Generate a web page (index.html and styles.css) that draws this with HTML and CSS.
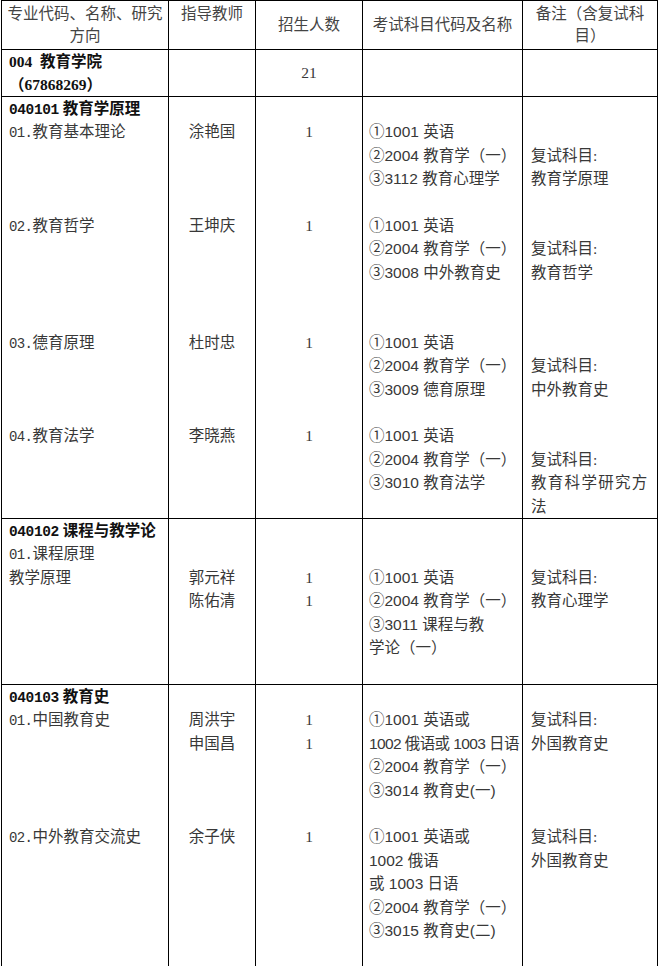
FILE: index.html
```html
<!DOCTYPE html>
<html lang="zh-CN">
<head>
<meta charset="utf-8">
<title>招生专业目录</title>
<link rel="stylesheet" href="styles.css">
</head>
<body>
<table class="plan">
  <colgroup>
    <col class="c1"><col class="c2"><col class="c3"><col class="c4"><col class="c5">
  </colgroup>
  <tr class="head">
    <td class="hc"><div>专业代码、名称、研究</div><div>方向</div></td>
    <td class="hc">指导教师</td>
    <td class="hc mid">招生人数</td>
    <td class="hc mid">考试科目代码及名称</td>
    <td class="hc"><div>备注（含复试科</div><div>目）</div></td>
  </tr>
  <tr class="school">
    <td class="name"><div class="b">004&nbsp; 教育学院</div><div class="b">（67868269）</div></td>
    <td></td>
    <td class="cnt mid">21</td>
    <td></td>
    <td></td>
  </tr>
  <tr class="sec sec1">
    <td class="name">
      <div class="ln"><b class="code">040101</b> <b>教育学原理</b></div>
      <div class="ln"><span class="m">01.</span>教育基本理论</div>
      <div class="ln"></div><div class="ln"></div><div class="ln"></div>
      <div class="ln"><span class="m">02.</span>教育哲学</div>
      <div class="ln"></div><div class="ln"></div><div class="ln"></div><div class="ln"></div>
      <div class="ln"><span class="m">03.</span>德育原理</div>
      <div class="ln"></div><div class="ln"></div><div class="ln"></div>
      <div class="ln"><span class="m">04.</span>教育法学</div>
    </td>
    <td class="tutor">
      <div class="ln"></div>
      <div class="ln">涂艳国</div>
      <div class="ln"></div><div class="ln"></div><div class="ln"></div>
      <div class="ln">王坤庆</div>
      <div class="ln"></div><div class="ln"></div><div class="ln"></div><div class="ln"></div>
      <div class="ln">杜时忠</div>
      <div class="ln"></div><div class="ln"></div><div class="ln"></div>
      <div class="ln">李晓燕</div>
    </td>
    <td class="cnt">
      <div class="ln"></div>
      <div class="ln">1</div>
      <div class="ln"></div><div class="ln"></div><div class="ln"></div>
      <div class="ln">1</div>
      <div class="ln"></div><div class="ln"></div><div class="ln"></div><div class="ln"></div>
      <div class="ln">1</div>
      <div class="ln"></div><div class="ln"></div><div class="ln"></div>
      <div class="ln">1</div>
    </td>
    <td class="exam">
      <div class="ln"></div>
      <div class="ln">①1001 英语</div>
      <div class="ln">②2004 教育学（一）</div>
      <div class="ln">③3112 教育心理学</div>
      <div class="ln"></div>
      <div class="ln">①1001 英语</div>
      <div class="ln">②2004 教育学（一）</div>
      <div class="ln">③3008 中外教育史</div>
      <div class="ln"></div><div class="ln"></div>
      <div class="ln">①1001 英语</div>
      <div class="ln">②2004 教育学（一）</div>
      <div class="ln">③3009 德育原理</div>
      <div class="ln"></div>
      <div class="ln">①1001 英语</div>
      <div class="ln">②2004 教育学（一）</div>
      <div class="ln">③3010 教育法学</div>
    </td>
    <td class="note">
      <div class="ln"></div><div class="ln"></div>
      <div class="ln">复试科目:</div>
      <div class="ln">教育学原理</div>
      <div class="ln"></div><div class="ln"></div>
      <div class="ln">复试科目:</div>
      <div class="ln">教育哲学</div>
      <div class="ln"></div><div class="ln"></div><div class="ln"></div>
      <div class="ln">复试科目:</div>
      <div class="ln">中外教育史</div>
      <div class="ln"></div><div class="ln"></div>
      <div class="ln">复试科目:</div>
      <div class="ln wide">教育科学研究方</div>
      <div class="ln">法</div>
    </td>
  </tr>
  <tr class="sec sec2">
    <td class="name">
      <div class="ln"><b class="code">040102</b> <b>课程与教学论</b></div>
      <div class="ln"><span class="m">01.</span>课程原理</div>
      <div class="ln">教学原理</div>
    </td>
    <td class="tutor">
      <div class="ln"></div><div class="ln"></div>
      <div class="ln">郭元祥</div>
      <div class="ln">陈佑清</div>
    </td>
    <td class="cnt">
      <div class="ln"></div><div class="ln"></div>
      <div class="ln">1</div>
      <div class="ln">1</div>
    </td>
    <td class="exam">
      <div class="ln"></div><div class="ln"></div>
      <div class="ln">①1001 英语</div>
      <div class="ln">②2004 教育学（一）</div>
      <div class="ln">③3011 课程与教</div>
      <div class="ln">学论（一）</div>
    </td>
    <td class="note">
      <div class="ln"></div><div class="ln"></div>
      <div class="ln">复试科目:</div>
      <div class="ln">教育心理学</div>
    </td>
  </tr>
  <tr class="sec sec3">
    <td class="name">
      <div class="ln"><b class="code">040103</b> <b>教育史</b></div>
      <div class="ln"><span class="m">01.</span>中国教育史</div>
      <div class="ln"></div><div class="ln"></div><div class="ln"></div><div class="ln"></div>
      <div class="ln"><span class="m">02.</span>中外教育交流史</div>
    </td>
    <td class="tutor">
      <div class="ln"></div>
      <div class="ln">周洪宇</div>
      <div class="ln">申国昌</div>
      <div class="ln"></div><div class="ln"></div><div class="ln"></div>
      <div class="ln">余子侠</div>
    </td>
    <td class="cnt">
      <div class="ln"></div>
      <div class="ln">1</div>
      <div class="ln">1</div>
      <div class="ln"></div><div class="ln"></div><div class="ln"></div>
      <div class="ln">1</div>
    </td>
    <td class="exam">
      <div class="ln"></div>
      <div class="ln">①1001 英语或</div>
      <div class="ln tight">1002 俄语或 1003 日语</div>
      <div class="ln">②2004 教育学（一）</div>
      <div class="ln">③3014 教育史(一)</div>
      <div class="ln"></div>
      <div class="ln">①1001 英语或</div>
      <div class="ln">1002 俄语</div>
      <div class="ln">或 1003 日语</div>
      <div class="ln">②2004 教育学（一）</div>
      <div class="ln">③3015 教育史(二)</div>
    </td>
    <td class="note">
      <div class="ln"></div>
      <div class="ln">复试科目:</div>
      <div class="ln">外国教育史</div>
      <div class="ln"></div><div class="ln"></div><div class="ln"></div>
      <div class="ln">复试科目:</div>
      <div class="ln">外国教育史</div>
    </td>
  </tr>
</table>
</body>
</html>
```

FILE: styles.css
```css
* {
  box-sizing: border-box;
  margin: 0;
  padding: 0;
}

body {
  margin: 0;
  background: #ffffff;
  font-family: "Liberation Serif", "Noto Sans CJK SC", serif;
  font-size: 15.5px;
  color: #383838;
  --lh: 23.4px;
}

.plan {
  border-collapse: collapse;
  table-layout: fixed;
  width: 656px;
  margin-left: 1px;
}

.c1 { width: 167px; }
.c2 { width: 87px; }
.c3 { width: 107px; }
.c4 { width: 160px; }
.c5 { width: 135px; }

.plan td {
  border: 1px solid #000000;
  padding: 0;
  vertical-align: top;
  white-space: nowrap;
  overflow: hidden;
}

.head td {
  height: 49px;
  padding-top: 2px;
  line-height: 22px;
  text-align: center;
  color: #444444;
}

.plan td.mid {
  vertical-align: middle;
  padding-top: 0;
}

.school td {
  height: 46px;
  line-height: 23.5px;
}

.school .name {
  padding-top: 0;
  line-height: 23px;
}

.name {
  padding-left: 7px !important;
}

.b {
  font-weight: 700;
  color: #111111;
}

.sec td {
  line-height: var(--lh);
}

.sec1 td { height: 420px; }
.sec2 td { height: 166px; }
.sec3 td { height: 282px; }

.ln {
  height: var(--lh);
}

.code {
  font-family: "Liberation Mono", "Noto Sans CJK SC", monospace;
  font-size: 14.5px;
  letter-spacing: -0.4px;
  font-weight: 700;
  color: #111111;
}

.ln b {
  font-weight: 700;
  color: #111111;
}

.m {
  font-family: "Liberation Mono", monospace;
  font-size: 14px;
  letter-spacing: -0.6px;
}

.tutor,
.cnt {
  text-align: center;
}

.exam {
  padding-left: 6px !important;
  font-family: "Liberation Sans", "Noto Sans CJK SC", sans-serif;
}

.tight {
  letter-spacing: -0.6px;
}

.note {
  padding-left: 8px !important;
}

.wide {
  letter-spacing: 1.3px;
}
```
